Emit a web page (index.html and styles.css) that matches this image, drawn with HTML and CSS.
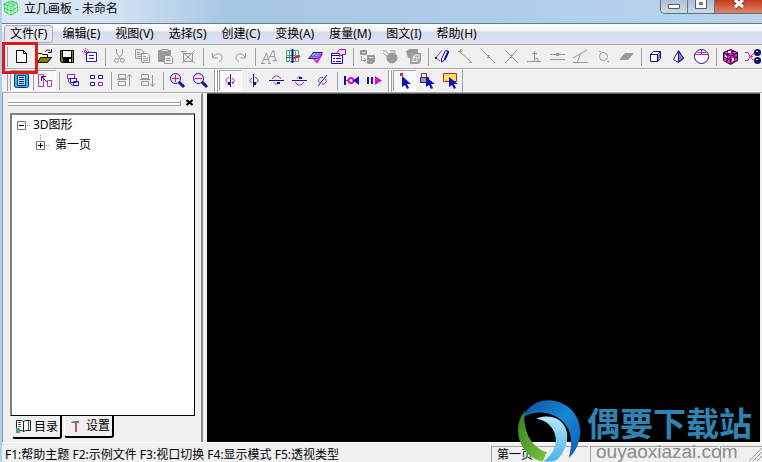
FILE: index.html
```html
<!DOCTYPE html>
<html lang="zh-CN">
<head>
    <meta charset="UTF-8">
    <title>立几画板 - 未命名</title>
    <link rel="stylesheet" href="styles.css">
</head>
<body>
    <header class="titlebar">
        <svg class="app-icon" width="16" height="16" viewBox="0 0 16 16"><path d="M1 4L8 1l6 2 1 8-7 4-6-3zM1 4l7 3 6-4M8 7v8M5 2l6 3v8M11 2L4 5v8M1 8l7 3 7-4"/></svg>
        <h1>立几画板 - 未命名</h1>
        <div class="controls">
            <button class="min" aria-label="最小化"><svg width="12" height="12" viewBox="0 0 12 12"><path d="M.5 4.500h11v4H.5z" fill="#fff" stroke="#555b68"/></svg></button>
            <button class="max" aria-label="最大化"><svg width="12" height="12" viewBox="0 0 12 12"><path d="M.5-2h11v10.500H.5zM4.500 2.500h3v2h-3z" fill="#fff" fill-rule="evenodd" stroke="#555b68"/></svg></button>
            <button class="close" aria-label="关闭"><svg width="12" height="12" viewBox="0 0 12 12"><path d="M2 0l8 7M10 0L2 7" stroke="#7c4038" stroke-width="5"/><path d="M2 0l8 7M10 0L2 7" stroke="#fff" stroke-width="3"/></svg></button>
        </div>
    </header>

    <nav class="menubar">
        <button class="active">文件(F)</button>
        <button>编辑(E)</button>
        <button>视图(V)</button>
        <button>选择(S)</button>
        <button>创建(C)</button>
        <button>变换(A)</button>
        <button>度量(M)</button>
        <button>图文(I)</button>
        <button>帮助(H)</button>
    </nav>

    <div class="toolbar">
        <button aria-label="新建"><svg viewBox="0 0 17 17"><path d="M3.500 2.500h7l3 3v9h-10zM10.500 2.500v3h3" fill="#fff" stroke="#000"/></svg></button>
        <button aria-label="打开"><svg viewBox="0 0 17 17"><path d="M1.500 14.500v-9h4l1 1h5v3" fill="#ffffa0" stroke="#000"/><path d="M1.500 14.500l3-5h11l-4 5z" fill="#808000" stroke="#000"/><path d="M9.500 3.500c1-2 4-2 5 0M15.500 1v3.500H12" fill="none" stroke="#000"/></svg></button>
        <button aria-label="保存"><svg viewBox="0 0 17 17"><path d="M1.500 2.500h13v12h-12l-1-1z" fill="#808000" stroke="#000"/><path d="M4 3h8v6H4z" fill="#f4f4f4"/><path d="M4 10h9v5H4z" fill="#000"/><path d="M10 11h2v3h-2z" fill="#fff"/><path d="M3.500 3v6.500h9V3" stroke="#000" fill="none"/></svg></button>
        <button aria-label="新建对象"><svg viewBox="0 0 17 17"><path d="M4.500 4.500h10v9h-10zM7 7.500h5M7 10.500h5" fill="#fff" stroke="#2020c0"/><path d="M1 1l5 5M6 1L1 6M3.500 0v7M0 3.500h7" stroke="#e020c0" stroke-dasharray="1 1"/></svg></button>
        <span class="sep"></span>
        <button aria-label="剪切"><svg class="off" viewBox="0 0 17 17"><path d="M5.500 1v4l4 6M11.500 1v4l-4 6"/><circle cx="5.500" cy="12.500" r="2"/><circle cx="11.500" cy="12.500" r="2"/></svg></button>
        <button aria-label="复制"><svg class="off" viewBox="0 0 17 17"><path d="M1.500 1.500h6l2 2v7h-8zM3 4.500h3M3 6.500h4M3 8.500h4"/><path d="M7.500 5.500h6l2 2v7h-8z" fill="#f0f0f0"/><path d="M9 8.500h3M9 10.500h5M9 12.500h5"/></svg></button>
        <button aria-label="粘贴"><svg class="off" viewBox="0 0 17 17"><path d="M1.500 2.500h12v11h-12z" fill="#999"/><path d="M4 1.500h7v2H4z" fill="#eee"/><path d="M7.500 7.500h6l2 2v6h-8z" fill="#f0f0f0"/><path d="M9 10.500h4M9 12.500h5"/></svg></button>
        <button aria-label="删除"><svg class="off" viewBox="0 0 17 17"><path d="M1 3l14 12M15 2L2 15M3.500 5.500h9v8h-9zM1 3.500h5"/></svg></button>
        <span class="sep"></span>
        <button aria-label="撤销"><svg class="off" viewBox="0 0 17 17"><path d="M3.500 5v5h5M4 9.500c2-5 9-5 9 0 0 2-1 3-3 4"/></svg></button>
        <button aria-label="重做"><svg class="off" viewBox="0 0 17 17"><path d="M13.500 5v5h-5M13 9.500c-2-5-9-5-9 0 0 2 1 3 3 4"/></svg></button>
        <span class="sep"></span>
        <button aria-label="字体"><svg class="off" viewBox="0 0 17 17"><path d="M1 15L5.500 5l3 10M3 11.500h5M8 10l4.500-8 2 10M9 8.500h5M0 15.500h4M7 15.500h3M12 12.500h4"/></svg></button>
        <button aria-label="坐标系"><svg viewBox="0 0 17 17"><path d="M2.500 2.500h12v11h-12zM2 7.500h12M5.500 3v10M11.500 3v10" fill="none" stroke="#58a878"/><path d="M8.500 1v14" stroke="#1010c0" stroke-width="2"/><path d="M2 9.500h8" stroke="#1a7a30"/><path d="M10 10l6-2" fill="none" stroke="#e02020" stroke-width="2"/></svg></button>
        <button aria-label="平面"><svg viewBox="0 0 17 17"><path d="M1.500 10.500l5-6h9l-5 6z" fill="#a0a0e0" stroke="#2010b0"/><path d="M5 10l5-5M8 10l5-5M4 8.500h8" stroke="#7068c8"/><path d="M7 11l3 3 5-8" fill="none" stroke="#e020d0" stroke-width="2"/></svg></button>
        <button aria-label="属性"><svg viewBox="0 0 17 17"><path d="M1.500 5.500h11v10h-11zM1 7.500h11" fill="#fff" stroke="#1010b0"/><path d="M3 10.500h2M6 10.500h5M3 13.500h2M6 13.500h5" stroke="#1010b0"/><path d="M6.500 5.500l3-4h6v5h-3l-3 2v-3z" fill="#ffd8f8" stroke="#a010a0"/></svg></button>
        <span class="sep"></span>
        <button aria-label="平移"><svg class="off" viewBox="0 0 17 17"><path d="M1.500 2.500h6v4h-6zM8.500 7.500h7v6l-2 2h-5z" fill="#999"/><path d="M2.500 8v4.500H7M5 10l2 2-2 2"/><path d="M3 4.500h3M10 9.500h4" stroke="#ddd"/></svg></button>
        <button aria-label="旋转"><svg class="off" viewBox="0 0 17 17"><circle cx="10" cy="10" r="5" fill="#999"/><path d="M1 3h3l3 4M1 5l5 4M8 3h5v3"/></svg></button>
        <button aria-label="缩放"><svg class="off" viewBox="0 0 17 17"><path d="M1.500 3.500l3-2h8v4h-6v4h-3z" fill="#999"/><path d="M5.500 7.500l2-2h8v8l-2 2h-8z" fill="#aaa"/><path d="M8 9.500h4v4H8zM8 9l3-2h3v4" stroke="#eee"/></svg></button>
        <span class="sep"></span>
        <button aria-label="画笔"><svg viewBox="0 0 17 17"><path d="M2 9.500l6-7M2 10l4 3" fill="none" stroke="#c020c0"/><path d="M1 9h2v2H1z" fill="#1010a0"/><path d="M7.500 11l4-8.500 3 1-4 8.500-3 2z" fill="#fff" stroke="#1010a0"/><path d="M14.500 3l-4 9" stroke="#1010a0" stroke-width="2"/></svg></button>
        <button aria-label="线段"><svg class="off" viewBox="0 0 17 17"><path d="M2 3l12 11M1 3.500h4M3.500 1v4M12 14.500h3"/></svg></button>
        <button aria-label="中点"><svg class="off" viewBox="0 0 17 17"><path d="M2 2l13 13M7 7.500h3M7 9.500h3"/></svg></button>
        <button aria-label="交点"><svg class="off" viewBox="0 0 17 17"><path d="M2 2l13 13M14 2L2 15M7 7.500h3M7 9.500h3"/></svg></button>
        <button aria-label="垂线"><svg class="off" viewBox="0 0 17 17"><path d="M1 13.500h14M8.500 3v10M6 5.500h5M9 10.500h3v3"/></svg></button>
        <button aria-label="平行线"><svg class="off" viewBox="0 0 17 17"><path d="M1 6.500h15M1 11.500h15M7 5.500h3v2H7"/></svg></button>
        <button aria-label="角"><svg class="off" viewBox="0 0 17 17"><path d="M1 14.500h15M1 10L15 2M8.500 6l-3 8"/></svg></button>
        <button aria-label="圆"><svg class="off" viewBox="0 0 17 17"><circle cx="8.500" cy="8.500" r="4"/><path d="M4 3.500h2M12 13.500h2"/></svg></button>
        <button aria-label="面"><svg class="off" viewBox="0 0 17 17"><path d="M2 11.500l5-6h8l-5 6z" fill="#999"/></svg></button>
        <span class="sep"></span>
        <button aria-label="长方体"><svg viewBox="0 0 17 17"><path d="M3.500 6.500l3-3h7v7l-3 3h-7zM3.500 6.500h7v7M10.500 6.500l3-3" fill="#fff" stroke="#1a108c"/><path d="M11 7l2-3v6l-2 3z" fill="#8888d8"/></svg></button>
        <button aria-label="棱锥"><svg viewBox="0 0 17 17"><path d="M8.500 2.500l-5 9 5 3 5-4z" fill="#fff" stroke="#1a108c"/><path d="M8.500 3v11l5-4z" fill="#8080d0" stroke="#1a108c"/></svg></button>
        <button aria-label="球"><svg viewBox="0 0 17 17"><circle cx="8.500" cy="8.500" r="7" fill="#fff" stroke="#1a108c"/><path d="M2 6.500h13M4 4.500h9M8.500 2v5" stroke="#d020b0"/></svg></button>
        <span class="sep"></span>
        <button aria-label="魔方"><svg viewBox="0 0 17 17"><path d="M1.500 4.500l7-3 7 3v8l-7 4-7-4z" fill="#e030d0" stroke="#300030"/><path d="M2 5l7 3 6-3M8.500 8v8M5 3l7 3v8M12 3L5 6v8M2 9l7 3 6-3" fill="none" stroke="#300030"/><path d="M6 3h3v2H6zM3 7l2 1v2L3 9zM10 10h2v3h-2z" fill="#fff"/></svg></button>
        <button aria-label="关系"><svg viewBox="0 0 17 17"><circle cx="12.500" cy="4.500" r="3.500" fill="#10105c"/><circle cx="12.500" cy="12.500" r="3.500" fill="#10105c"/><path d="M11 3h2v1h-2zM11 11h2v1h-2z" fill="#fff"/><path d="M0 4.500h3l2 4 4-3M5 8.500h3M0 12.500h3l2-4 4 4" fill="none" stroke="#d020a0"/></svg></button>
        <span class="highlight"></span>
    </div>

    <div class="toolbar">
        <button class="pressed" aria-label="目录窗口"><svg viewBox="0 0 17 17"><rect x="1.500" y="1.500" width="14" height="14" rx="2" fill="#30b8f0" stroke="#0a3090"/><path d="M4.500 3.500h8v10h-8zM6 5.500h5M6 7.500h5M6 9.500h5M6 11.500h5" fill="#a8e8ff" stroke="#082878"/></svg></button>
        <button class="pressed" aria-label="选择模式"><svg viewBox="0 0 17 17"><path d="M2.500 2.500h5v12h-5zM11.500 8.500h4v6h-4z" fill="#fff" stroke="#c030c0"/><path d="M11 10L6 5M5.500 9V4.500H10" fill="none" stroke="#301060"/></svg></button>
        <span class="sep"></span>
        <button aria-label="层叠"><svg viewBox="0 0 17 17"><path d="M2.500 2.500h7v4h-7z" fill="#fff" stroke="#b010b0"/><path d="M5.500 6.500h6v4h-6zM8.500 9.500h5v4h-5z" fill="#fff" stroke="#1a10b0"/><path d="M3.500 7v3l5 4" fill="none" stroke="#b010b0"/></svg></button>
        <button aria-label="平铺"><svg viewBox="0 0 17 17"><path d="M2.500 3.500h4v3h-4zM10.500 3.500h4v3h-4zM2.500 10.500h4v3h-4z" fill="#fff" stroke="#1a10b0"/><path d="M10.500 10.500h4v3h-4z" fill="#fff" stroke="#b010b0"/></svg></button>
        <span class="sep"></span>
        <button aria-label="上移"><svg class="off" viewBox="0 0 17 17"><path d="M1.500 2.500h7v4h-7zM1.500 9.500h7v4h-7zM0 7.500h10M12.500 14V3M10 5.500l2.500-3 2.500 3"/></svg></button>
        <button aria-label="下移"><svg class="off" viewBox="0 0 17 17"><path d="M1.500 2.500h7v4h-7zM1.500 9.500h7v4h-7zM0 7.500h10M12.500 3v11M10 11.500l2.500 3 2.500-3"/></svg></button>
        <span class="sep"></span>
        <button aria-label="放大"><svg viewBox="0 0 17 17"><circle cx="6.500" cy="6.500" r="5" fill="#ffe4fa" stroke="#1a1080"/><path d="M10 10l5 5" stroke="#1a10a0" stroke-width="3"/><path d="M3 6.500h7M6.500 3v7" stroke="#d010b0"/></svg></button>
        <button aria-label="缩小"><svg viewBox="0 0 17 17"><circle cx="6.500" cy="6.500" r="5" fill="#ffe4fa" stroke="#1a1080"/><path d="M10 10l5 5" stroke="#1a10a0" stroke-width="3"/><path d="M3 6.500h7" stroke="#d010b0"/></svg></button>
        <span class="grip"></span>
        <button class="pressed" aria-label="左转"><svg viewBox="0 0 17 17"><path d="M8.500 2v13" stroke="#1a1090"/><path d="M7 5.500c-4 1-4 5 0 6M10 6.500c3 1 3 3 0 4M10 12l2-2" fill="none" stroke="#b010b0"/><path d="M6 10h2v3H6z" fill="#1a1090"/></svg></button>
        <button aria-label="右转"><svg viewBox="0 0 17 17"><path d="M8.500 2v13" stroke="#1a1090"/><path d="M10 5.500c4 1 4 5 0 6M7 6.500c-3 1-3 3 0 4" fill="none" stroke="#b010b0"/><path d="M9 10h2v3H9z" fill="#1a1090"/></svg></button>
        <button aria-label="上转"><svg viewBox="0 0 17 17"><path d="M1 8.500h15" stroke="#1a1090"/><path d="M4.500 7c1-4 7-4 8 0M6 10.500c1 2 4 2 5 0" fill="none" stroke="#b010b0"/><path d="M9 10h3v2H9z" fill="#1a1090"/></svg></button>
        <button aria-label="下转"><svg viewBox="0 0 17 17"><path d="M1 8.500h15" stroke="#1a1090"/><path d="M4.500 10c1 4 7 4 8 0M6 6.500c1-2 4-2 5 0" fill="none" stroke="#b010b0"/><path d="M8 5h3v2H8z" fill="#1a1090"/></svg></button>
        <button aria-label="倾斜"><svg viewBox="0 0 17 17"><path d="M4 14L13 3" stroke="#1a1090"/><path d="M6 10.500c-3-1-1-6 3-5M11 7c3 1 0 6-3 5" fill="none" stroke="#b010b0"/></svg></button>
        <span class="sep"></span>
        <button aria-label="倒放"><svg viewBox="0 0 17 17"><path d="M2 4v9" stroke="#1a10a0" stroke-width="2"/><path d="M3 8.500h3" stroke="#b010b0"/><circle cx="8" cy="8.500" r="2.500" fill="#fff" stroke="#d010c0" stroke-width="2"/><path d="M16 4v9l-6-4.500z" fill="#1a10c0"/></svg></button>
        <button aria-label="播放"><svg viewBox="0 0 17 17"><path d="M2 5v7M6 5v7" stroke="#1a10c0" stroke-width="2"/><path d="M9 4v9l7-4.500z" fill="#e010d0"/></svg></button>
        <span class="grip"></span>
        <button class="pressed" aria-label="选择点"><svg viewBox="0 0 17 17"><path d="M4 1h3v3H4z" fill="#e0108c"/><path d="M6 4v11l3-2 2 4 2-1-2-4h4z" fill="#1010b0"/></svg></button>
        <button aria-label="锁定选择"><svg viewBox="0 0 17 17"><path d="M2.500 5.500v-4h5v4" fill="none" stroke="#702080"/><path d="M1.500 5.500h8v5h-8z" fill="#a0a0a0" stroke="#302050"/><path d="M7 5v10l3-2 2 4 2-1-2-4h4z" fill="#1010b0"/></svg></button>
        <button aria-label="框选"><svg viewBox="0 0 17 17"><path d="M1.500 1.500h13v8h-13z" fill="#ffdc40" stroke="#c02050"/><path d="M3 4.500h10M3 6.500h10" stroke="#fff8c0" stroke-dasharray="1 1"/><path d="M7 5v10l3-2 2 4 2-1-2-4h4z" fill="#1010b0"/></svg></button>
        <span class="toolbar-end"></span>
    </div>

    <main class="workspace">
        <aside class="sidebar">
            <div class="panel-head">
                <span class="panel-grip"></span>
                <button aria-label="关闭面板"><svg width="7" height="7" viewBox="0 0 7 7"><path d="M.5 1l6 5M6.500 1l-6 5" stroke="#000" stroke-width="2"/></svg></button>
            </div>
            <div class="tree">
                <ul>
                    <li>
                        <svg width="16" height="11" viewBox="0 0 16 11"><path d="M1.500 1.500h8v8h-8z" fill="#fff" stroke="#777"/><path d="M3 5.500h5" stroke="#000"/><path d="M11 5.500h4" stroke="#888" stroke-dasharray="1 1"/></svg><span>3D图形</span>
                        <ul>
                            <li><svg width="19" height="20" viewBox="0 0 19 20"><path d="M1.500 6.500h8v8h-8z" fill="#fff" stroke="#777"/><path d="M3 10.500h5M5.500 8v5" stroke="#000"/><path d="M11 10.500h4M5.500 0v6" stroke="#888" stroke-dasharray="1 1"/></svg><span>第一页</span></li>
                        </ul>
                    </li>
                </ul>
            </div>
            <div class="tabs">
                <button class="current"><svg width="17" height="17" viewBox="0 0 17 17"><path d="M1.500 2.500h5l2 1v10l-2-1h-5zM8.500 3.500l2-1h5v10h-5l-2 1" fill="#fff" stroke="#222"/><path d="M3 4.500h3M3 6.500h3M3 8.500h3M13.500 3v9" stroke="#555"/><path d="M1 10h4v5H1z" fill="#50a070"/></svg>目录</button>
                <button><svg width="17" height="17" viewBox="0 0 17 17"><path d="M4 5c1-2 3-2 8-2v2H4z" fill="#777"/><path d="M8 5h2v9H8z" fill="#b06070"/></svg>设置</button>
            </div>
        </aside>
        <div class="canvas"></div>
    </main>

    <footer class="statusbar">
        <p>F1:帮助主题 F2:示例文件 F3:视口切换 F4:显示模式 F5:透视类型</p>
        <div class="cell page">第一页</div>
        <div class="cell info"></div>
        <div class="cell size"><svg width="14" height="14" viewBox="0 0 14 14"><path d="M1 14L14 1M5 14l9-9M9 14l5-5" stroke="#999"/></svg></div>
    </footer>

    <div class="watermark">
        <svg width="63" height="62" viewBox="117 28 190 188">
            <defs>
                <linearGradient id="blue" x1="0" y1="0" x2="1" y2="1"><stop offset="0" stop-color="#0a4f9c"/><stop offset=".5" stop-color="#1687d8"/><stop offset="1" stop-color="#0a5cae"/></linearGradient>
                <linearGradient id="sky" x1="0" y1="0" x2="0" y2="1"><stop offset="0" stop-color="#b8e6fa"/><stop offset="1" stop-color="#45b5ea"/></linearGradient>
                <linearGradient id="green" x1="0" y1="0" x2="1" y2="1"><stop offset="0" stop-color="#2f7d22"/><stop offset="1" stop-color="#7cc93c"/></linearGradient>
            </defs>
            <path d="M138 60C108 95 112 145 135 177c15 21 35 34 57 37l12-28C160 175 127 120 138 60z" fill="url(#green)"/>
            <path d="M132 80C145 45 178 28 213 29c52 3 92 43 92 95 0 35-15 62-35 80 12-40 12-80-15-108C228 66 175 54 132 80z" fill="url(#blue)"/>
            <path d="M172 84c35-12 68-5 85 22 19 32 5 78-22 103-13 6-27 7-41 5 30-22 44-54 34-84-8-24-27-40-56-46z" fill="url(#sky)"/>
        </svg>
        <div class="brand">
            <strong>偶要下载站</strong>
            <span>ouyaoxiazai.com</span>
        </div>
    </div>
</body>
</html>
```
FILE: styles.css
```css
* {
    box-sizing: border-box;
}
body {
    margin: 0;
    height: 100vh;
    display: flex;
    flex-direction: column;
    overflow: hidden;
    position: relative;
    background: #f0f0f0;
    border-left: 2px solid #b4cde6;
    color: #000;
    font: 12px/16px "Noto Sans", "Noto Sans CJK SC", sans-serif;
}
button {
    margin: 0;
    padding: 0;
    border: 1px solid transparent;
    background: none;
    color: inherit;
    font: inherit;
    white-space: nowrap;
}
svg {
    display: block;
    flex: none;
}

/* title bar */
.titlebar {
    height: 24px;
    flex: none;
    display: flex;
    align-items: flex-start;
    gap: 5px;
    padding-left: 1px;
    border-bottom: 1px solid #66788c;
    background: linear-gradient(to right, #dce8f4, #d3e2f1 15%, #a5c5e4 30%, #accce9 60%, #b9d5ee);
}
.app-icon {
    fill: #e8fff0;
    stroke: #20d850;
}
.titlebar h1 {
    flex: 1;
    margin: 0;
    font-size: 12px;
    font-weight: normal;
    line-height: 18px;
}
.controls {
    display: flex;
    border: 1px solid #5b6b80;
    border-top: 0;
    border-right: 0;
    border-radius: 0 0 0 5px;
    overflow: hidden;
}
.controls button {
    width: 27px;
    height: 13px;
    display: flex;
    justify-content: center;
    border: 0;
    border-right: 1px solid #65758a;
    background: linear-gradient(#b0c0d2, #cbd9e7);
}
.controls .close {
    width: 47px;
    border: 0;
    background: linear-gradient(#c43a20, #e08468);
}

/* menu */
.menubar {
    height: 21px;
    flex: none;
    display: flex;
    gap: 1px;
    padding-left: 1px;
    border-bottom: 1px solid #a0a0a0;
    background: linear-gradient(#fff, #eef1f8 35%, #d5dbee 40%, #e0e5f4);
}
.menubar button {
    height: 18px;
    margin: 1px;
    padding: 0 5px;
    line-height: 16px;
}
.menubar .active {
    border-color: #a8acb8;
    border-radius: 3px;
    background: #e4e7f0;
}

/* toolbars */
.toolbar {
    height: 24px;
    flex: none;
    display: flex;
    align-items: flex-start;
    position: relative;
    padding-left: 8px;
    border-top: 1px solid #fff;
    border-bottom: 1px solid #a8a8a8;
    background: #f0f0f0;
}
.toolbar::before {
    content: "";
    position: absolute;
    left: 5px;
    top: 1px;
    bottom: 1px;
    border-left: 1px solid #a0a0a0;
}
.toolbar button {
    width: 23px;
    height: 21px;
    flex: none;
    display: flex;
    align-items: center;
    justify-content: center;
}
.toolbar svg {
    width: 17px;
    height: 17px;
}
.toolbar .off {
    fill: none;
    stroke: #999;
}
.toolbar .pressed {
    border-color: #a0a0a0 #fff #fff #a0a0a0;
    background: #f8f8f8;
}
.sep {
    width: 6px;
    height: 20px;
    flex: none;
    background: linear-gradient(#a0a0a0, #a0a0a0) 3px 2px / 1px 100% no-repeat;
}
.grip {
    width: 7px;
    height: 22px;
    flex: none;
    border-left: 2px solid #f0f0f0;
    background: linear-gradient(to right, #a0a0a0 1px, #fff 1px, #fff 3px, #a0a0a0 3px, #a0a0a0 4px, #f0f0f0 4px);
}
.toolbar-end {
    height: 22px;
    border-left: 1px solid #a0a0a0;
}
.highlight {
    position: absolute;
    left: 0;
    top: -4px;
    width: 36px;
    height: 32px;
    border: 3px solid #e01818;
    z-index: 1;
}

/* workspace */
.workspace {
    flex: 1;
    min-height: 0;
    display: flex;
    gap: 4px;
    padding-right: 2px;
    border-left: 1px solid #8898a8;
}
.sidebar {
    width: 200px;
    display: flex;
    flex-direction: column;
    padding: 0 6px 3px 5px;
    border-top: 1px solid #fff;
    border-right: 2px solid #888;
}
.panel-head {
    height: 17px;
    display: flex;
    align-items: center;
    gap: 4px;
}
.panel-grip {
    flex: 1;
    height: 6px;
    border: 1px solid #a0a0a0;
    border-left: 0;
    border-top-color: #fff;
    background: linear-gradient(#f0f0f0 1px, #a0a0a0 1px, #a0a0a0 2px, #fff 2px);
}
.panel-head button {
    width: 10px;
    height: 10px;
}
.tree {
    flex: 1;
    margin: 2px 0 0 2px;
    border: 2px solid #808080;
    border-right: 1px solid #000;
    border-bottom: 1px solid #000;
    background: #fff;
}
.tree ul {
    margin: 0;
    padding: 0 0 0 4px;
    list-style: none;
}
.tree ul ul {
    padding-left: 19px;
}
.tree li {
    display: flex;
    flex-wrap: wrap;
    align-items: center;
    column-gap: 1px;
    line-height: 20px;
}
.tree li ul {
    width: 100%;
}
.tabs {
    display: flex;
    gap: 2px;
    padding-left: 4px;
}
.tabs button {
    height: 22px;
    display: flex;
    align-items: center;
    padding: 0 2px;
    border: 1px solid #000;
    border-width: 0 2px 2px 1px;
    border-left-color: #fff;
    border-radius: 0 0 3px 3px;
    gap: 2px;
}
.tabs .current {
    height: 23px;
}
.canvas {
    flex: 1;
    border-top: 1px solid #555;
    background: #000;
}

/* status bar */
.statusbar {
    height: 20px;
    flex: none;
    display: flex;
    gap: 2px;
    padding: 3px 0 0 3px;
    border-top: 1px solid #fff;
}
.statusbar p {
    flex: 1;
    margin: 0;
    line-height: 18px;
    white-space: nowrap;
}
.cell {
    border: 1px solid #a0a0a0;
    border-width: 1px 0 0 1px;
    padding-left: 5px;
    line-height: 16px;
}
.page {
    width: 97px;
}
.info {
    width: 128px;
}
.size {
    width: 42px;
    display: flex;
    justify-content: flex-end;
}

.watermark {
    position: absolute;
    right: 10px;
    bottom: 0;
    display: flex;
    align-items: flex-end;
    gap: 6px;
}
.brand {
    display: flex;
    flex-direction: column;
}
.brand strong {
    color: #2f83b0;
    font-size: 33px;
    line-height: 36px;
}
.brand span {
    padding-left: 9px;
    color: #8a8a8a;
    font: 19px/20px "Liberation Sans", Arial, sans-serif;
}
```
